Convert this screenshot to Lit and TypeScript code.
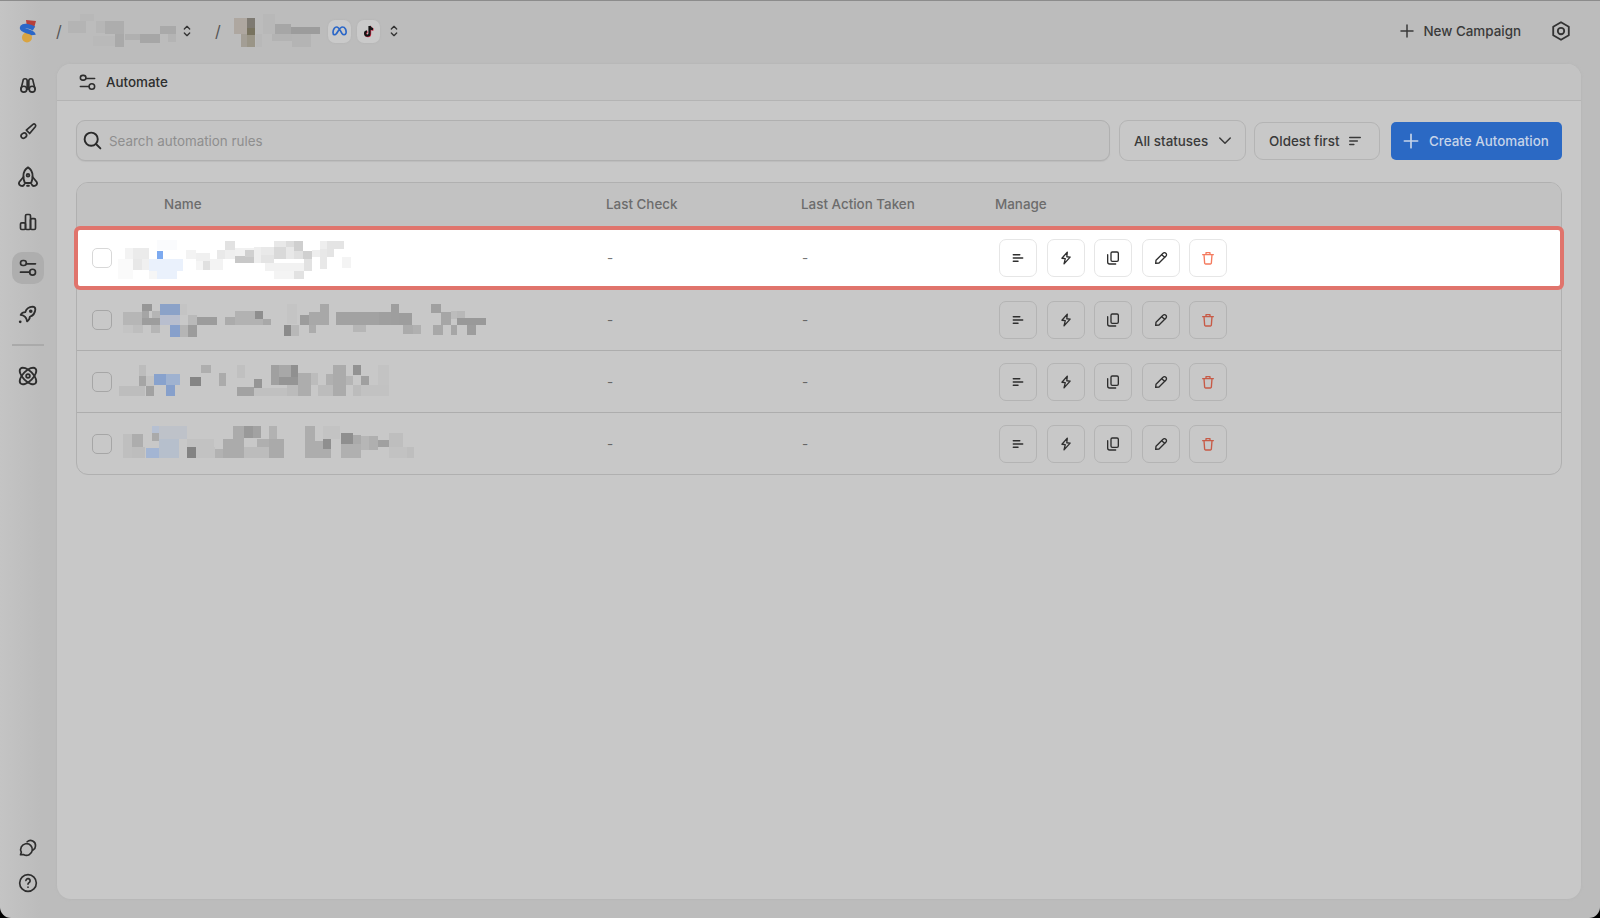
import { LitElement, html, css, svg } from "lit";
import { customElement } from "lit/decorators.js";

type B = [number, number, number, number, string];

const ROW1: B[] = [[75,48,25,32,"#f3f3f3"],[100,48,48,34,"#ebebeb"],[55,80,45,60,"#fafafa"],[100,82,27,32,"#e8e8e8"],[127,82,22,32,"#f0f0f0"],[148,82,100,34,"#eaf1fc"],[170,116,60,24,"#eaf1fc"],[148,116,22,24,"#f6f6f6"],[170,25,60,30,"#fafbfd"],[170,57,20,24,"#7daaf0"],[258,54,30,26,"#f3f3f3"],[288,62,42,26,"#f0f0f0"],[308,88,22,26,"#e0e0e0"],[288,88,20,26,"#f5f5f5"],[330,80,40,34,"#f3f3f3"],[352,54,22,26,"#e9e9e9"],[374,26,30,28,"#e2e2e2"],[374,54,30,26,"#efefef"],[404,48,58,24,"#f1f1f1"],[404,72,58,22,"#c8c8c8"],[436,54,26,20,"#d0d0d0"],[462,46,20,48,"#eeeeee"],[482,46,40,24,"#e9e9e9"],[482,70,40,24,"#e4e4e4"],[522,26,36,20,"#e8e8e8"],[558,26,24,20,"#dcdcdc"],[582,26,28,32,"#cfcfcf"],[522,46,36,34,"#d9d9d9"],[558,46,24,34,"#e8e8e8"],[582,58,28,22,"#e0e0e0"],[610,58,26,24,"#d0d0d0"],[494,94,120,24,"#f2f2f2"],[522,118,60,22,"#f4f4f4"],[582,118,30,22,"#e2e2e2"],[612,82,24,36,"#e2e2e2"],[636,54,24,20,"#eeeeee"],[660,26,22,24,"#eeeeee"],[682,26,50,24,"#e4e4e4"],[660,50,22,60,"#e8e8e8"],[682,50,20,24,"#e4e4e4"],[726,74,28,34,"#f4f4f4"]];
const ROW2: B[] = [[70,240,56,38,"#b6b6b6"],[126,216,30,22,"#979797"],[126,238,22,20,"#a5a5a5"],[126,258,54,20,"#9d9d9d"],[156,238,24,20,"#b5b5b5"],[180,248,60,30,"#b8bece"],[180,216,60,32,"#8ba2c8"],[240,216,20,32,"#c4c4c4"],[70,278,30,26,"#c4c4c4"],[100,278,30,26,"#bebebe"],[152,278,28,26,"#b5b5b5"],[210,280,30,36,"#87a0cb"],[240,280,24,36,"#b5b5b5"],[264,280,26,36,"#9c9c9c"],[264,250,28,30,"#b9b9b9"],[292,254,60,26,"#9c9c9c"],[376,254,28,26,"#ababab"],[404,238,60,42,"#b2b2b2"],[464,238,24,22,"#8e8e8e"],[464,260,24,20,"#b2b2b2"],[488,260,26,20,"#a8a8a8"],[560,216,30,60,"#c4c4c4"],[552,280,22,32,"#8b8b8b"],[574,280,24,32,"#b8b8b8"],[600,248,26,32,"#9c9c9c"],[626,240,34,40,"#a8a8a8"],[660,216,28,64,"#a8a8a8"],[626,280,22,24,"#acacac"],[708,240,130,40,"#a2a2a2"],[838,240,34,40,"#9f9f9f"],[872,216,24,64,"#9e9e9e"],[896,244,40,36,"#9d9d9d"],[760,280,38,20,"#b6b6b6"],[910,280,28,26,"#ababab"],[938,280,24,26,"#b0b0b0"],[994,216,28,26,"#a0a0a0"],[1022,240,30,40,"#a6a6a6"],[1000,280,28,30,"#a8a8a8"],[1052,280,20,30,"#a6a6a6"],[1052,238,20,22,"#bcbcbc"],[1072,238,24,20,"#b8b8b8"],[1072,258,86,22,"#999999"],[1102,280,26,30,"#9d9d9d"]];
const ROW3: B[] = [[116,26,22,34,"#bcbcbc"],[116,60,22,30,"#a5a5a5"],[56,90,80,30,"#bdbdbd"],[138,90,24,30,"#a2a2a2"],[162,54,36,34,"#88a2cd"],[198,54,42,34,"#9fb2d0"],[198,88,26,32,"#87a0cb"],[138,60,24,30,"#c2c2c2"],[302,26,30,26,"#aeaeae"],[270,64,34,26,"#858585"],[356,52,22,38,"#ababab"],[412,26,24,40,"#c0c0c0"],[412,94,50,26,"#a2a2a2"],[462,96,100,24,"#c0c0c0"],[462,68,24,28,"#959595"],[514,28,24,60,"#a0a0a0"],[538,28,34,34,"#a8a8a8"],[572,28,22,34,"#909090"],[538,62,56,26,"#959595"],[562,88,32,32,"#bbbbbb"],[594,52,40,68,"#adadad"],[634,52,20,36,"#bcbcbc"],[654,88,46,32,"#bcbcbc"],[678,54,22,34,"#b0b0b0"],[700,28,38,92,"#ababab"],[738,60,22,28,"#b5b5b5"],[760,28,24,30,"#929292"],[784,60,24,26,"#a0a0a0"],[760,88,24,32,"#bcbcbc"],[784,88,84,32,"#c2c2c2"],[834,28,34,60,"#c3c3c3"]];
const ROW4: B[] = [[68,234,28,72,"#bfbfbf"],[96,234,34,40,"#adadad"],[96,274,40,32,"#bdbdbd"],[155,210,22,22,"#b6c0d2"],[155,232,22,22,"#aaaaaa"],[178,210,84,38,"#bec2c9"],[138,276,40,30,"#a3b5d3"],[178,248,60,58,"#b6bfcc"],[262,248,80,26,"#c2c2c2"],[288,274,56,32,"#c2c2c2"],[262,274,26,32,"#838383"],[344,278,24,28,"#b2b2b2"],[368,248,64,58,"#ababab"],[398,210,34,38,"#ababab"],[432,210,26,36,"#999999"],[458,210,26,36,"#a2a2a2"],[432,272,74,34,"#bcbcbc"],[470,248,36,24,"#afafaf"],[506,210,26,38,"#b2b2b2"],[506,248,46,58,"#aaaaaa"],[616,210,28,46,"#adadad"],[616,256,52,50,"#adadad"],[668,248,26,30,"#8f8f8f"],[668,278,26,28,"#adadad"],[670,210,50,38,"#c3c3c3"],[724,264,60,42,"#b0b0b0"],[724,230,36,34,"#8f8f8f"],[760,238,24,26,"#aaaaaa"],[784,240,24,42,"#b6b6b6"],[808,240,26,42,"#afafaf"],[834,252,34,22,"#a0a0a0"],[868,232,42,42,"#bebebe"],[868,274,54,32,"#c2c2c2"],[922,274,20,32,"#bebebe"]];
const TOP1: B[] = [[205,58,55,38,"#b4b4b4"],[240,38,42,20,"#b8b8b8"],[280,105,65,30,"#b9b9b9"],[290,60,30,35,"#b6b6b6"],[316,60,58,38,"#adadad"],[346,98,28,40,"#a9a9a9"],[375,98,50,18,"#b0b0b0"],[422,98,60,26,"#a6a6a6"],[480,75,50,22,"#a9a9a9"],[505,98,25,24,"#b4b4b4"]];
const TOP2: B[] = [[700,52,40,48,"#aea7a0"],[740,52,24,30,"#7e7a72"],[740,82,24,20,"#78735f"],[720,100,20,38,"#a39e95"],[740,102,24,36,"#9a9587"],[786,40,36,60,"#b8b8b8"],[765,100,20,38,"#b8b8b8"],[822,70,50,30,"#a6a6a6"],[872,78,85,22,"#9c9c9c"],[815,100,60,20,"#b3b3b3"],[875,100,55,38,"#b4b4b4"]];

const rects = (bs: B[]) => bs.map(([x, y, w, h, c]) => svg`<rect x=${x} y=${y} width=${w} height=${h} fill=${c}></rect>`);

const ic = (body: unknown, size = 20, sw = 2) => html`<svg width=${size} height=${size} viewBox="0 0 24 24" fill="none" stroke="currentColor" stroke-width=${sw} stroke-linecap="round" stroke-linejoin="round">${body}</svg>`;

const sel = ic(svg`<path d="M8 9l4-4 4 4M16 15l-4 4-4-4"/>`, 16);
const sliders = svg`<rect x="3" y="3" width="7" height="6" rx="3"/><path d="M10 7h11M3 17h11"/><circle cx="17.500" cy="17" r="3.500"/>`;
const rows: Array<[B[], number, boolean]> = [[ROW1, 78, true], [ROW2, 264, false], [ROW3, 78, false], [ROW4, 264, false]];

@customElement("app-root")
export class AppRoot extends LitElement {
  static styles = css`
    :host { display: block; width: 1600px; height: 918px; background: #000; font-family: Inter, "Liberation Sans", sans-serif; color: #333; overflow: hidden; }
    * { box-sizing: border-box; }
    svg { display: block; flex: none; }
    .shell { width: 1600px; height: 918px; display: grid; grid-template-columns: 57px 1fr; grid-template-rows: 63px 1fr; background: linear-gradient(90deg, #c4c4c4, #bcbcbc 40px); border-radius: 0 0 11px 11px; border-top: 1px solid #8c8c8c; }
    .top { grid-column: 1 / 3; display: flex; align-items: center; padding: 0 28px 3px 19px; }
    .logo { width: 18px; height: 24px; }
    .slash { font-size: 16px; color: #555; width: 8px; text-align: center; }
    .blur { flex: none; }
    .pill { width: 23px; height: 23px; border-radius: 7px; background: #cacaca; display: flex; align-items: center; justify-content: center; box-shadow: 0 0 2px #b0b0b0; }
    .new { margin-left: auto; display: flex; align-items: center; gap: 7px; font-size: 13.4px; font-weight: 500; color: #3a3a3a; }
    .gear { margin-left: 29px; color: #333; }
    .side { display: flex; flex-direction: column; align-items: center; padding: 5px 0 19px; gap: 13.8px; color: #2e2e2e; }
    .slot { width: 32px; height: 32px; border-radius: 10px; margin-left: -1px; display: flex; align-items: center; justify-content: center; flex: none; }
    .slot.on { background: #aeaeae; }
    .sep { width: 32px; height: 2px; background: #aaaaaa; margin: 0 0 0 -1px; flex: none; }
    .end { margin-top: auto; display: flex; flex-direction: column; gap: 3px; }
    .panel { margin: 0 19px 19px 0; background: #c8c8c8; border-radius: 14px; display: flex; flex-direction: column; box-shadow: 0 0 3px #b4b4b4; }
    .phead { height: 37px; display: flex; align-items: center; gap: 9px; padding-left: 21px; background: #c3c3c3; border-bottom: 1px solid #b4b4b4; border-radius: 14px 14px 0 0; font-size: 13.4px; font-weight: 500; color: #2e2e2e; flex: none; }
    .pbody { padding: 19px 19px; }
    .tools { display: flex; align-items: center; height: 41px; }
    .search { flex: 1; height: 41px; border: 1.5px solid #b0b0b0; border-radius: 9px; background: #c4c4c4; display: flex; align-items: center; gap: 6px; padding-left: 5px; color: #2a2a2a; box-shadow: 0 1px 1px #bcbcbc; }
    .search input { flex: 1; border: 0; outline: 0; background: none; font: 400 13.4px Inter, "Liberation Sans", sans-serif; padding: 0; }
    .search input::placeholder { color: #8e8e8e; opacity: 1; }
    .fbtn { display: flex; align-items: center; font-size: 13.4px; font-weight: 500; color: #3a3a3a; border: 1.5px solid #b4b4b4; border-radius: 9px; padding-left: 14px; flex: none; }
    .status { width: 127px; height: 41px; margin-left: 9px; gap: 5px; }
    .sort { width: 126px; height: 38px; margin-left: 8px; gap: 8px; }
    .create { width: 171px; height: 38px; margin-left: 11px; background: #2b69c4; border-radius: 5px; display: flex; align-items: center; gap: 8px; padding-left: 10px; color: #c6d4e9; font-size: 13.4px; font-weight: 500; flex: none; }
    .table { margin-top: 21px; border: 1px solid #b0b0b0; border-radius: 12px; background: #c8c8c8; }
    .thead, .row { display: grid; align-items: center; }
    .thead { grid-template-columns: 87px 442px 195px 194px 1fr; height: 44px; padding-bottom: 2px; background: #c2c2c2; border-radius: 11px 11px 0 0; font-size: 13.4px; font-weight: 500; color: #6c6c6c; }
    .row { grid-template-columns: 41px 488px 195px 194px 1fr; height: 62px; border-bottom: 1px solid #adadad; font-size: 13.4px; color: #666; position: relative; }
    .row:last-child { height: 61px; border-bottom: 0; }
    .row > * { position: relative; }
    .row.hl { border-bottom-color: transparent; }
    .row.hl::before { content: ""; position: absolute; inset: -1px -3px -2px -3px; background: #fff; border: 4px solid #e0746c; border-radius: 6px; }
    .cb { width: 20px; height: 20px; margin-left: 15px; border: 1.5px solid #a6a6a6; border-radius: 5px; }
    .hl .cb { border-color: #d8d8d8; }
    .dash { padding-left: 1px; }
    .hl .dash { color: #777; }
    .acts { display: flex; gap: 9.6px; padding-left: 4px; color: #2e2e2e; }
    .act { width: 38px; height: 38px; border: 1.5px solid #b4b4b4; border-radius: 7px; display: flex; align-items: center; justify-content: center; }
    .hl .act { border-color: #e6e6e6; background: #fff; }
    .trash { color: #c75a46; }
    .hl .trash { color: #f47a5e; }
  `;

  private blur(bs: B[], vx: number, vy: number, vw: number, vh: number, ml: number) {
    return html`<svg class="blur" style="margin-left:${ml}px" width=${vw / 3} height=${vh / 3} viewBox="${vx} ${vy} ${vw} ${vh}" shape-rendering="crispEdges">${rects(bs)}</svg>`;
  }

  render() {
    const acts = html`
      <div class="act">${ic(svg`<path d="M4 6.500h11M4 12h16M4 17.500h8"/>`, 14, 2.6)}</div>
      <div class="act">${ic(svg`<path d="M13 3L6 13h5l-1 8 8-11h-5z" transform="rotate(6 12 12)"/>`, 16)}</div>
      <div class="act">${ic(svg`<rect x="9" y="3" width="11" height="14" rx="2"/><path d="M16 21H7a3 3 0 0 1-3-3V7"/>`, 16)}</div>
      <div class="act">${ic(svg`<path d="M4 20l.5-4.500L15 5a3 3 0 0 1 4.500 4L9 19.500z"/><path d="M13 7l4.500 4"/>`, 16)}</div>
      <div class="act trash">${ic(svg`<path d="M4 7h16M9 7V4h6v3M6 7l1 13a1.500 1.500 0 0 0 1.500 1h7a1.500 1.500 0 0 0 1.500-1l1-13"/>`, 16)}</div>`;
    return html`<div class="shell">
      <header class="top">
        <svg class="logo" viewBox="0 0 18 24">
          <path d="M7 1l10 1-2 7-7-1z" fill="#b8403a"></path>
          <circle cx="8" cy="18.500" r="5" fill="#d9a441"></circle>
          <path d="M15 9.500C11 7 3 5.500 3 9c0 3.500 11 3 11.500 7" fill="none" stroke="#2b67c8" stroke-width="4.500"></path>
        </svg>
        <span class="slash" style="margin-left:18px">/</span>
        ${this.blur(TOP1, 205, 38, 330, 100, 5)}
        <span style="margin-left:1px">${sel}</span>
        <span class="slash" style="margin-left:19px">/</span>
        ${this.blur(TOP2, 700, 40, 258, 100, 12)}
        <span class="pill" style="margin-left:8px"><svg width="15" height="10" viewBox="0 0 15 10" fill="none" stroke="#2b67c8" stroke-width="1.700"><path d="M1 6.500C1 3 3 1 4.500 1 7 1 8.500 5 10 7.500c1 1.500 3.500 2 4-.5C14.500 4 13 1 10.500 1 8 1 6 5.500 4.500 7.500 3 9.500 1 9 1 6.500z"></path></svg></span>
        <span class="pill" style="margin-left:6px"><svg width="14" height="14" viewBox="0 0 14 14" fill="none" stroke-width="2.200"><path d="M7.500 2v7.500a2.200 2.200 0 1 1-2.500-2.200M7.500 2c.3 2 1.600 3 3.500 3.200" stroke="#e0304e" transform="translate(.6 .5)"></path><path d="M7.500 2v7.500a2.200 2.200 0 1 1-2.500-2.200M7.500 2c.3 2 1.600 3 3.500 3.200" stroke="#141414"></path></svg></span>
        <span style="margin-left:6px">${sel}</span>
        <div class="new">${ic(svg`<path d="M12 4v16M4 12h16"/>`, 18)}<span>New Campaign</span></div>
        <div class="gear">${ic(svg`<path d="M12 2.500l8.500 4.800v9.400L12 21.500l-8.500-4.800V7.300z"/><circle cx="12" cy="12" r="3.500"/>`, 22)}</div>
      </header>
      <nav class="side">
        <div class="slot">${ic(svg`<circle cx="7" cy="17" r="3.500"/><circle cx="17" cy="17" r="3.500"/><path d="M3.500 17L6 7a2.500 2.500 0 0 1 5 0v10M20.500 17L18 7a2.500 2.500 0 0 0-5 0v10M11 13h2"/>`)}</div>
        <div class="slot">${ic(svg`<path d="M10 11L18 4a2 2 0 0 1 3 2.500L14 15z"/><ellipse cx="7" cy="17.500" rx="3.500" ry="2.800" transform="rotate(-35 7 17.500)"/>`)}</div>
        <div class="slot">${ic(svg`<path d="M12 1.500c3.500 2 5 5.500 5 9.500 0 3-.5 5-1.500 7.500h-7C7.500 16 7 14 7 11c0-4 1.500-7.500 5-9.500z"/><circle cx="12" cy="10" r="1.500"/><path d="M7 12L2.500 17.500a2.800 2.800 0 0 0 5.500 2.500M17 12l4.500 5.500a2.800 2.800 0 0 1-5.500 2.500M11 21.500h2"/>`, 22)}</div>
        <div class="slot">${ic(svg`<rect x="3" y="13" width="6" height="8" rx="1.500"/><rect x="9" y="3" width="6" height="18" rx="1.500"/><rect x="15" y="8" width="6" height="13" rx="1.500"/>`)}</div>
        <div class="slot on">${ic(sliders)}</div>
        <div class="slot">${ic(svg`<path d="M4 13a8 8 0 0 1 7 7 6 6 0 0 0 3-5 9 9 0 0 0 6-8 3 3 0 0 0-3-3 9 9 0 0 0-8 6 6 6 0 0 0-5 3z"/><circle cx="15" cy="9" r="1"/><path d="M3.500 20.500h.01" stroke-width="3"/>`, 22)}</div>
        <div class="sep"></div>
        <div class="slot">${ic(svg`<circle cx="12" cy="12" r="2"/><ellipse cx="12" cy="12" rx="11.500" ry="5.500" transform="rotate(45 12 12)"/><ellipse cx="12" cy="12" rx="11.500" ry="5.500" transform="rotate(-45 12 12)"/>`, 22)}</div>
        <div class="end">
          <div class="slot">${ic(svg`<path d="M3 20l1-3a7 7 0 1 1 3 3z"/><path d="M11 4.500a6 6 0 0 1 10 5 6 6 0 0 1-3 5"/>`)}</div>
          <div class="slot">${ic(svg`<circle cx="12" cy="12" r="10"/><path d="M12 17h.01M12 13.500c0-2 2.500-2 2.500-4a2.500 2.500 0 0 0-5-.5"/>`)}</div>
        </div>
      </nav>
      <main class="panel">
        <div class="phead">${ic(sliders, 19)}<span>Automate</span></div>
        <div class="pbody">
          <div class="tools">
            <div class="search">${ic(svg`<circle cx="10.500" cy="10.500" r="7.500"/><path d="M16 16l5 5"/>`, 21, 2.200)}<input placeholder="Search automation rules" /></div>
            <div class="fbtn status"><span>All statuses</span><span style="margin-left:3px">${ic(svg`<path d="M5 8l7 7 7-7"/>`, 18)}</span></div>
            <div class="fbtn sort"><span>Oldest first</span>${ic(svg`<path d="M3 6h18M3 12h13M3 18h7"/>`, 14, 2.600)}</div>
            <div class="create">${ic(svg`<path d="M12 4v16M4 12h16"/>`, 20)}<span>Create Automation</span></div>
          </div>
          <div class="table">
            <div class="thead"><span></span><span>Name</span><span>Last Check</span><span>Last Action Taken</span><span>Manage</span></div>
            ${rows.map(([bs, cy, hl]) => html`<div class="row ${hl ? "hl" : ""}">
              <div class="cb"></div>
              ${this.blur(bs, 54, cy - 66, 1110, 132, 0)}
              <span class="dash">-</span>
              <span class="dash">-</span>
              <div class="acts">${acts}</div>
            </div>`)}
          </div>
        </div>
      </main>
    </div>`;
  }
}
